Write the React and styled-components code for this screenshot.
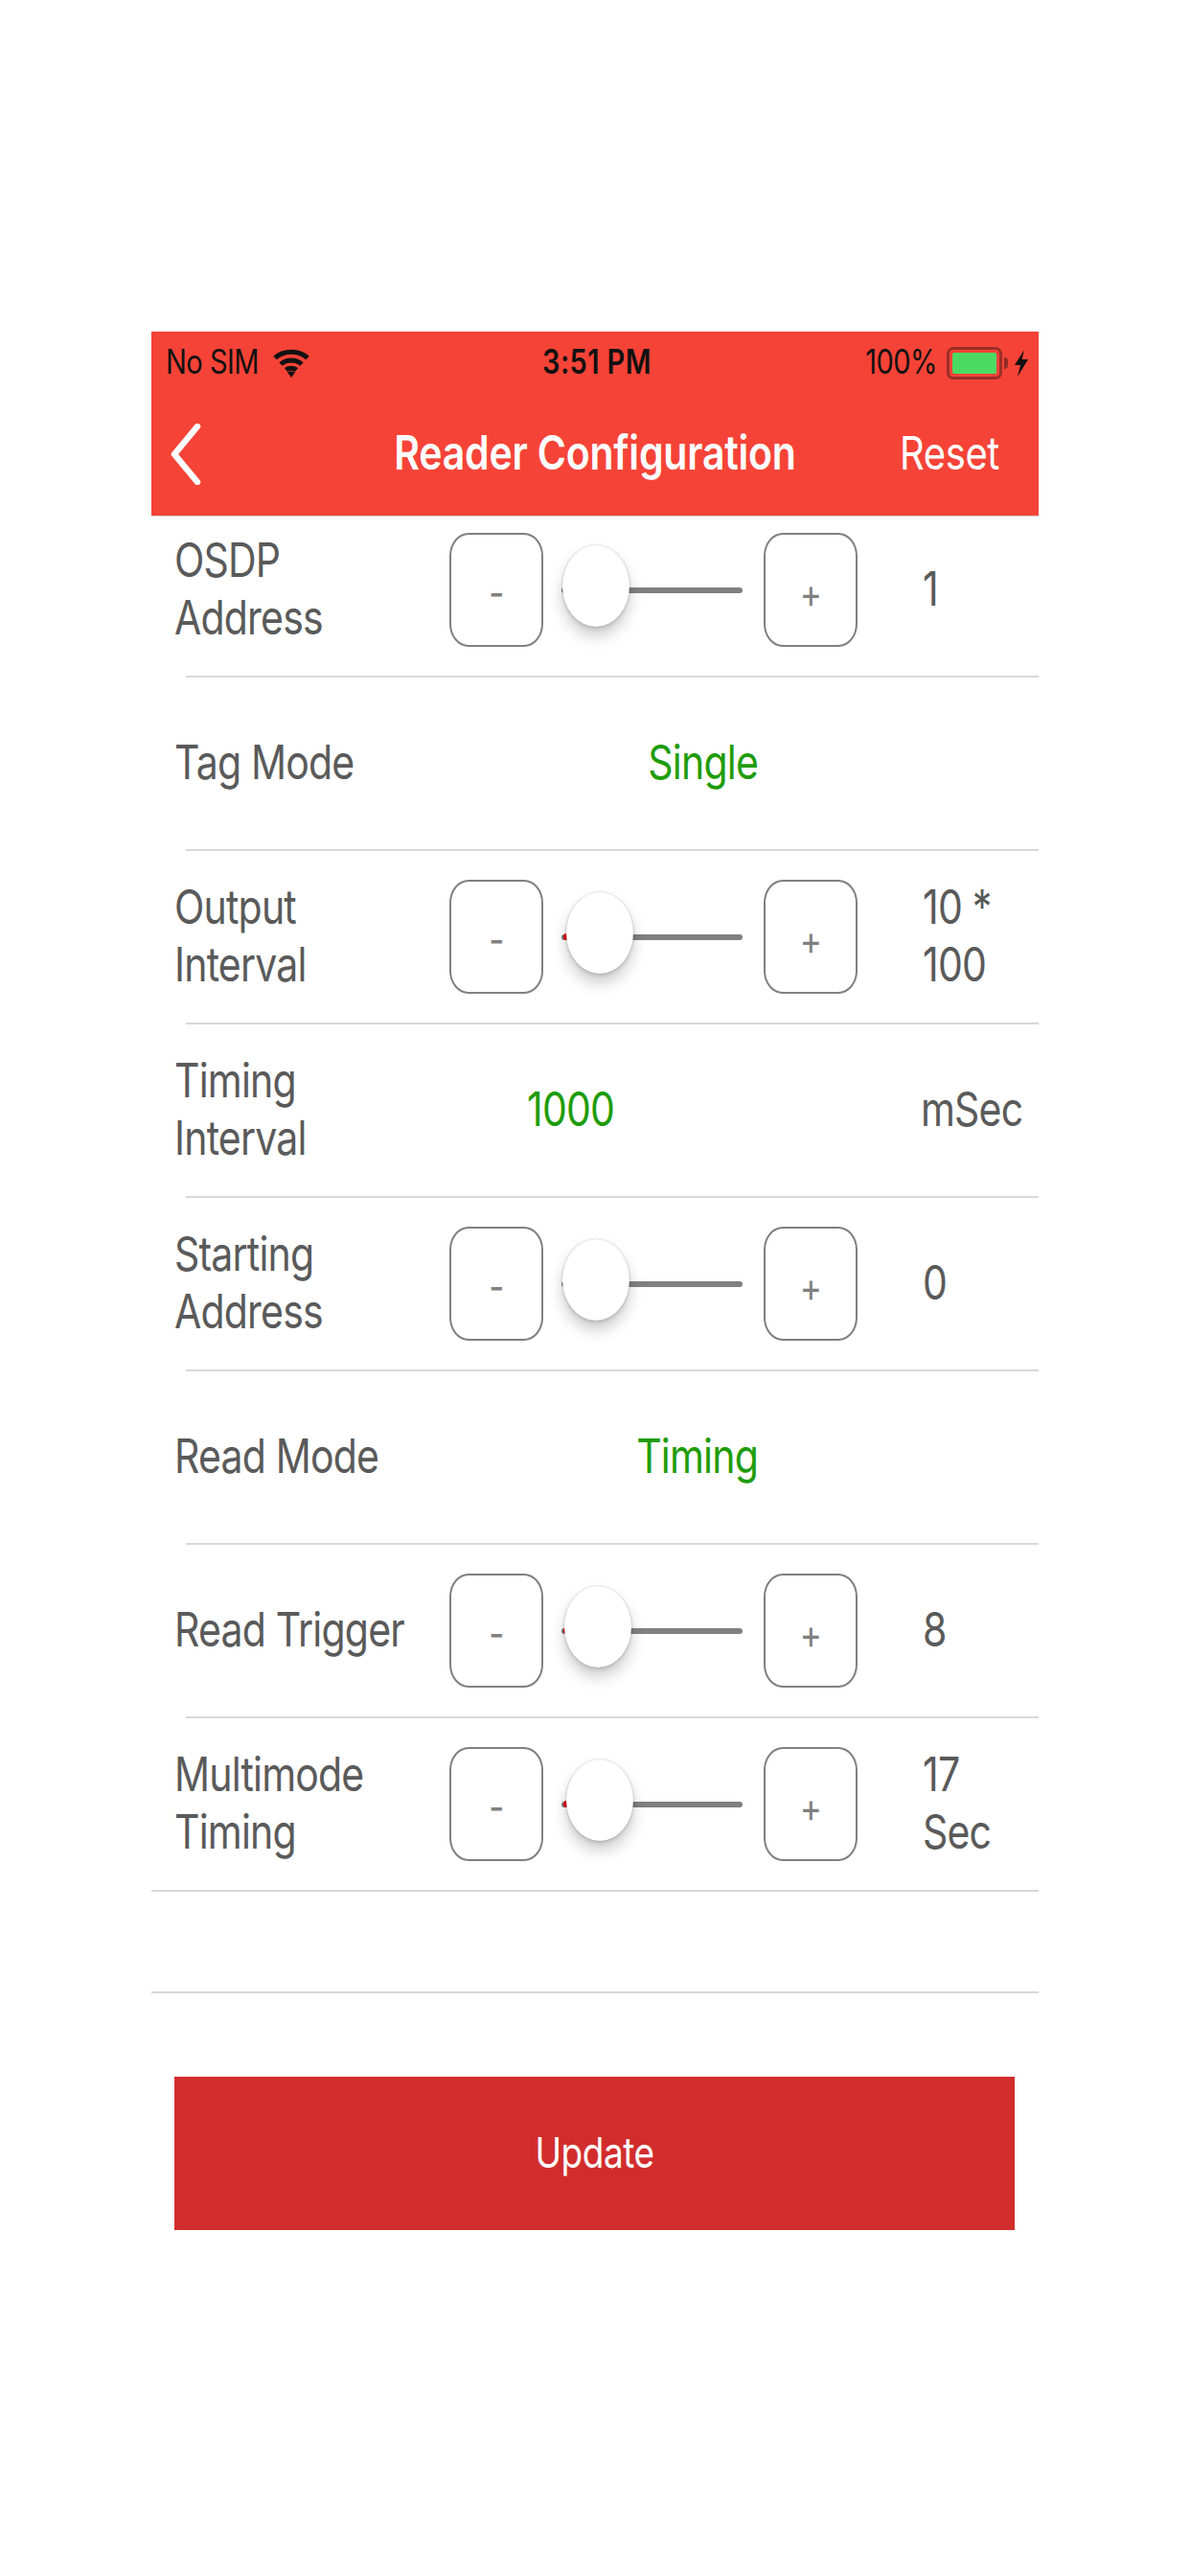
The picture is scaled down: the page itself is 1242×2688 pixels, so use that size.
import React from 'react'
import styled, { createGlobalStyle, css } from 'styled-components'

// the source capture is stretched vertically, so text gets the same stretch
const stretched = css`
  display: inline-block;
  transform: translateY(-2px) scaleY(1.2);
`

const GlobalStyle = createGlobalStyle`
  html, body {
    margin: 0;
    background: #fff;
    font-family: Inter, "Noto Sans", sans-serif;
  }
`

const Page = styled.div`
  width: 1242px;
  height: 2688px;
  padding: 346px 158px 0;
  box-sizing: border-box;
  overflow: hidden;
`

const Header = styled.header`
  background: #f64337;
  height: 193px;
  display: flex;
  flex-direction: column;
  border-bottom: 1px solid #cfd3d6;
  box-sizing: border-box;
`

const StatusBar = styled.div`
  height: 62px;
  display: grid;
  grid-template-columns: 1fr auto 1fr;
  align-items: center;
  padding: 2px 11px 0 15px;
  color: #111;
  font-size: 29px;
`

const StatusGroup = styled.div`
  display: flex;
  align-items: center;
  gap: ${p => p.$gap || 0}px;
  justify-content: ${p => (p.$end ? 'flex-end' : 'flex-start')};
`

const StatusText = styled.span`
  ${stretched}
  font-weight: ${p => (p.$bold ? 600 : 400)};
  letter-spacing: ${p => (p.$bold ? 0.4 : -0.5)}px;
`

const NavBar = styled.div`
  flex: 1;
  display: grid;
  grid-template-columns: 1fr auto 1fr;
  align-items: center;
  padding: 0 41px;
  color: #fff;
`

const BackLink = styled.span`
  display: flex;
  margin-left: -21px;
`

const NavTitle = styled.span`
  ${stretched}
  font-size: 41px;
  font-weight: 600;
  letter-spacing: -0.2px;
`

const NavAction = styled.span`
  ${stretched}
  justify-self: end;
  font-size: 40px;
  letter-spacing: -0.4px;
`

const List = styled.div`
  overflow: hidden;
`

const ListInner = styled.div`
  margin-top: -13px;
`

const Row = styled.div`
  height: ${p => p.$height || 179}px;
  display: flex;
  align-items: center;
  padding-left: 24px;
  color: #5a5a5a;
  font-size: 41px;
  line-height: 50px;
  letter-spacing: -0.8px;
`

const Divider = styled.div`
  height: 2px;
  background: #d8d8d8;
  margin-left: ${p => (p.$full ? 0 : 36)}px;
`

const LabelCell = styled.div`
  width: 287px;
  flex: none;
`

const Label = styled.span`
  ${stretched}
  max-width: 250px;
`

const Middle = styled.div`
  width: 328px;
  flex: none;
  box-sizing: border-box;
  color: #1f9c0a;
  text-align: ${p => (p.$left ? 'left' : 'right')};
  padding: ${p => (p.$left ? '0 0 0 81px' : '0 6px 0 0')};
`

const GreenText = styled.span`
  ${stretched}
`

const ValueCell = styled.div`
  margin-left: ${p => p.$offset || 0}px;
  width: 100px;
  flex: none;
`

const Value = styled.span`
  ${stretched}
`

const StepButton = styled.div`
  width: 98px;
  height: 119px;
  flex: none;
  box-sizing: border-box;
  border: 2.5px solid #808080;
  border-radius: 20px / 24px;
  display: flex;
  align-items: center;
  justify-content: center;
  padding-top: 8px;
  color: #808080;
  font-size: 35px;
`

const StepGlyph = styled.span`
  ${stretched}
`

const Slider = styled.div`
  position: relative;
  width: 189px;
  height: 6px;
  margin: 0 22px 0 19px;
  flex: none;
  background: #808080;
  border-radius: 3px;
`

const SliderMark = styled.span`
  position: absolute;
  left: 2px;
  top: -1px;
  width: 6px;
  height: 7px;
  border-radius: 50%;
  background: #e60012;
`

const Thumb = styled.span`
  position: absolute;
  left: ${p => p.$offset}px;
  top: -44px;
  width: 70px;
  height: 85px;
  border-radius: 50%;
  background: #fff;
  box-shadow: 0 0 2px rgba(0, 0, 0, 0.2), 0 10px 16px rgba(0, 0, 0, 0.2), 0 2px 4px rgba(0, 0, 0, 0.12);
`

const Footer = styled.div`
  padding: 87px 25px 0 24px;
`

const UpdateButton = styled.div`
  height: 160px;
  background: #d22d2d;
  color: #fff;
  font-size: 37px;
  letter-spacing: -0.5px;
  display: flex;
  align-items: center;
  justify-content: center;
`

const UpdateText = styled.span`
  ${stretched}
`

const Battery = styled.div`
  width: 58px;
  height: 34px;
  box-sizing: border-box;
  border: 3px solid #9c2f28;
  border-radius: 7px;
  padding: 3px;
  position: relative;
  margin: 0 13px 0 10px;
`

const BatteryFill = styled.div`
  height: 100%;
  background: #4cd964;
  border-radius: 2px;
`

const BatteryNub = styled.span`
  position: absolute;
  right: -9px;
  top: 8px;
  width: 4px;
  height: 12px;
  background: #8f2c25;
  border-radius: 0 4px 4px 0;
`

const Wifi = () => (
  <svg width="38" height="30" viewBox="0 0 38 30" fill="none" stroke="#111" strokeWidth="5">
    <path d="M2 9.5C11 1 27 1 36 9.5" />
    <path d="M8 16C14 10.5 24 10.5 30 16" />
    <path d="M13.5 22C16.5 19.5 21.5 19.5 24.5 22" />
    <path d="M15 24.5L19 30L23 24.5C21 23 17 23 15 24.5Z" fill="#111" stroke="none" />
  </svg>
)

const Bolt = () => (
  <svg width="14" height="28" viewBox="0 0 14 28">
    <path d="M10 0L0 16H6L3 28L14 10H7.500Z" fill="#111" />
  </svg>
)

const BackChevron = () => (
  <svg width="32" height="64" viewBox="0 0 32 64" fill="none" stroke="#fff" strokeWidth="6.5" strokeLinecap="round" strokeLinejoin="round">
    <path d="M28 3L4 32L28 61" />
  </svg>
)

function SliderRow({ label, value, offset, marked, valueOffset = 68 }) {
  return (
    <Row>
      <LabelCell><Label>{label}</Label></LabelCell>
      <StepButton><StepGlyph>-</StepGlyph></StepButton>
      <Slider>
        {marked && <SliderMark />}
        <Thumb $offset={offset} />
      </Slider>
      <StepButton><StepGlyph>+</StepGlyph></StepButton>
      <ValueCell $offset={valueOffset}><Value>{value}</Value></ValueCell>
    </Row>
  )
}

export default function App() {
  return (
    <Page>
      <GlobalStyle />
      <Header>
        <StatusBar>
          <StatusGroup $gap={15}>
            <StatusText>No SIM</StatusText>
            <Wifi />
          </StatusGroup>
          <StatusText $bold>3:51 PM</StatusText>
          <StatusGroup $end>
            <StatusText>100%</StatusText>
            <Battery>
              <BatteryFill />
              <BatteryNub />
            </Battery>
            <Bolt />
          </StatusGroup>
        </StatusBar>
        <NavBar>
          <BackLink><BackChevron /></BackLink>
          <NavTitle>Reader Configuration</NavTitle>
          <NavAction>Reset</NavAction>
        </NavBar>
      </Header>
      <List>
        <ListInner>
          <SliderRow label="OSDP Address" value="1" offset={1} />
          <Divider />
          <Row>
            <LabelCell><Label>Tag Mode</Label></LabelCell>
            <Middle><GreenText>Single</GreenText></Middle>
          </Row>
          <Divider />
          <SliderRow label="Output Interval" value="10 * 100" offset={5} marked />
          <Divider />
          <Row>
            <LabelCell><Label>Timing Interval</Label></LabelCell>
            <Middle $left><GreenText>1000</GreenText></Middle>
            <ValueCell $offset={164}><Value>mSec</Value></ValueCell>
          </Row>
          <Divider />
          <SliderRow label="Starting Address" value="0" offset={1} />
          <Divider />
          <Row>
            <LabelCell><Label>Read Mode</Label></LabelCell>
            <Middle><GreenText>Timing</GreenText></Middle>
          </Row>
          <Divider />
          <SliderRow label="Read Trigger" value="8" offset={3} marked />
          <Divider />
          <SliderRow label="Multimode Timing" value="17 Sec" offset={5} marked />
          <Divider $full />
          <Row $height={104} />
          <Divider $full />
        </ListInner>
      </List>
      <Footer>
        <UpdateButton><UpdateText>Update</UpdateText></UpdateButton>
      </Footer>
    </Page>
  )
}
